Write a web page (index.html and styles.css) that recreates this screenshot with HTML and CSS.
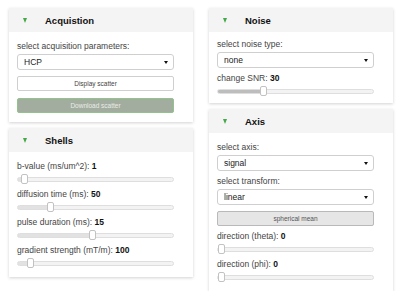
FILE: index.html
```html
<!DOCTYPE html>
<html>
<head>
    <meta charset="utf-8">
    <title>Scatter controls</title>
    <link rel="stylesheet" href="styles.css">
</head>
<body>
    <div class="page">
        <div class="column">
            <div class="panel">
                <div class="panel-head"><span class="arrow"></span><h2>Acquistion</h2></div>
                <div class="panel-body">
                    <label class="field-label">select acquisition parameters:</label>
                    <div class="select-wrap">
                        <select class="select"><option>HCP</option></select>
                    </div>
                    <button class="btn btn-plain">Display scatter</button>
                    <button class="btn btn-green">Download scatter</button>
                </div>
            </div>
            <div class="panel">
                <div class="panel-head"><span class="arrow"></span><h2>Shells</h2></div>
                <div class="panel-body">
                    <label class="field-label">b-value (ms/um^2): <b>1</b></label>
                    <input class="slider" type="range" min="0" max="44" value="1" style="--fill:2%">
                    <label class="field-label">diffusion time (ms): <b>50</b></label>
                    <input class="slider" type="range" min="1" max="250" value="50" style="--fill:20%">
                    <label class="field-label">pulse duration (ms): <b>15</b></label>
                    <input class="slider" type="range" min="1" max="30" value="15" style="--fill:48%">
                    <label class="field-label">gradient strength (mT/m): <b>100</b></label>
                    <input class="slider" type="range" min="0" max="1600" value="100" style="--fill:6%">
                </div>
            </div>
        </div>
        <div class="column">
            <div class="panel">
                <div class="panel-head"><span class="arrow"></span><h2>Noise</h2></div>
                <div class="panel-body noise-body">
                    <label class="field-label">select noise type:</label>
                    <div class="select-wrap">
                        <select class="select"><option>none</option></select>
                    </div>
                    <label class="field-label">change SNR: <b>30</b></label>
                    <input class="slider slider-dark" type="range" min="1" max="103" value="30" style="--fill:29%">
                </div>
            </div>
            <div class="panel">
                <div class="panel-head"><span class="arrow"></span><h2>Axis</h2></div>
                <div class="panel-body">
                    <label class="field-label">select axis:</label>
                    <div class="select-wrap">
                        <select class="select"><option>signal</option></select>
                    </div>
                    <label class="field-label">select transform:</label>
                    <div class="select-wrap">
                        <select class="select"><option>linear</option></select>
                    </div>
                    <button class="btn btn-gray">spherical mean</button>
                    <label class="field-label">direction (theta): <b>0</b></label>
                    <input class="slider" type="range" min="0" max="90" value="0" style="--fill:0%">
                    <label class="field-label">direction (phi): <b>0</b></label>
                    <input class="slider" type="range" min="0" max="360" value="0" style="--fill:0%">
                </div>
            </div>
        </div>
    </div>
</body>
</html>
```

FILE: styles.css
```css
*{
    margin: 0;
    box-sizing: border-box;
}
body{
    background-color: white;
    font-family: "Liberation Sans", Arial, sans-serif;
    color: #333;
}
.page{
    display: flex;
    gap: 16px;
    padding: 8px 0 0 9px;
}
.column{
    width: 184px;
    display: flex;
    flex-direction: column;
    gap: 6px;
}
.panel{
    background-color: white;
    box-shadow: 0 1px 3px rgba(0, 0, 0, 0.18);
}
.panel-head{
    height: 24px;
    background-color: #f4f4f4;
    display: flex;
    align-items: center;
    padding-left: 14px;
}
.arrow{
    width: 0;
    height: 0;
    border-left: 2.5px solid transparent;
    border-right: 2.5px solid transparent;
    border-top: 5px solid #45a94a;
    margin-right: 18px;
}
h2{
    font-size: 9.5px;
    font-weight: bold;
    color: #111;
}
.panel-body{
    display: flex;
    flex-direction: column;
    padding: 9px 19px 9px 8px;
}
.noise-body{
    padding-top: 7px;
    padding-bottom: 7px;
}
.field-label{
    font-size: 8.5px;
    line-height: 11px;
    color: #444;
    margin-top: 5px;
}
.field-label:first-child{
    margin-top: 0;
}
.field-label b{
    color: #111;
}
.select-wrap{
    position: relative;
    margin-top: 2px;
}
.select-wrap::after{
    content: "";
    position: absolute;
    right: 6px;
    top: 6.5px;
    border-left: 2px solid transparent;
    border-right: 2px solid transparent;
    border-top: 3px solid #111;
}
.select{
    -webkit-appearance: none;
    appearance: none;
    display: block;
    width: 157px;
    height: 16px;
    border: 1px solid #cfcfcf;
    border-radius: 3px;
    background-color: white;
    font-family: "Liberation Sans", Arial, sans-serif;
    font-size: 8.5px;
    color: #222;
    padding: 0 0 0 6px;
}
.btn{
    width: 157px;
    height: 15px;
    margin-top: 6px;
    border-radius: 2px;
    font-family: "Liberation Sans", Arial, sans-serif;
    font-size: 6.5px;
    padding: 0;
}
.btn-plain{
    background-color: white;
    border: 1px solid #cfcfcf;
    color: #444;
}
.btn-green{
    margin-top: 7px;
    background-color: #a3ad9f;
    border: 1px solid #93c38d;
    color: #e9ece7;
}
.btn-gray{
    background-color: #e6e6e6;
    border: 1px solid #b9b9b9;
    color: #555;
}
.slider{
    -webkit-appearance: none;
    appearance: none;
    width: 157px;
    height: 10px;
    margin: 2px 0 0 0;
    background: transparent;
}
.slider::-webkit-slider-runnable-track{
    height: 5px;
    border: 1px solid #dedede;
    border-radius: 3px;
    background: linear-gradient(to right, #e2e2e2 var(--fill), #f3f3f3 var(--fill));
}
.slider-dark::-webkit-slider-runnable-track{
    background: linear-gradient(to right, #bdbdbd var(--fill), #f3f3f3 var(--fill));
}
.slider::-webkit-slider-thumb{
    -webkit-appearance: none;
    width: 7px;
    height: 10px;
    margin-top: -3.5px;
    background-color: white;
    border: 1px solid #c2c2c2;
    border-radius: 2px;
}
```
